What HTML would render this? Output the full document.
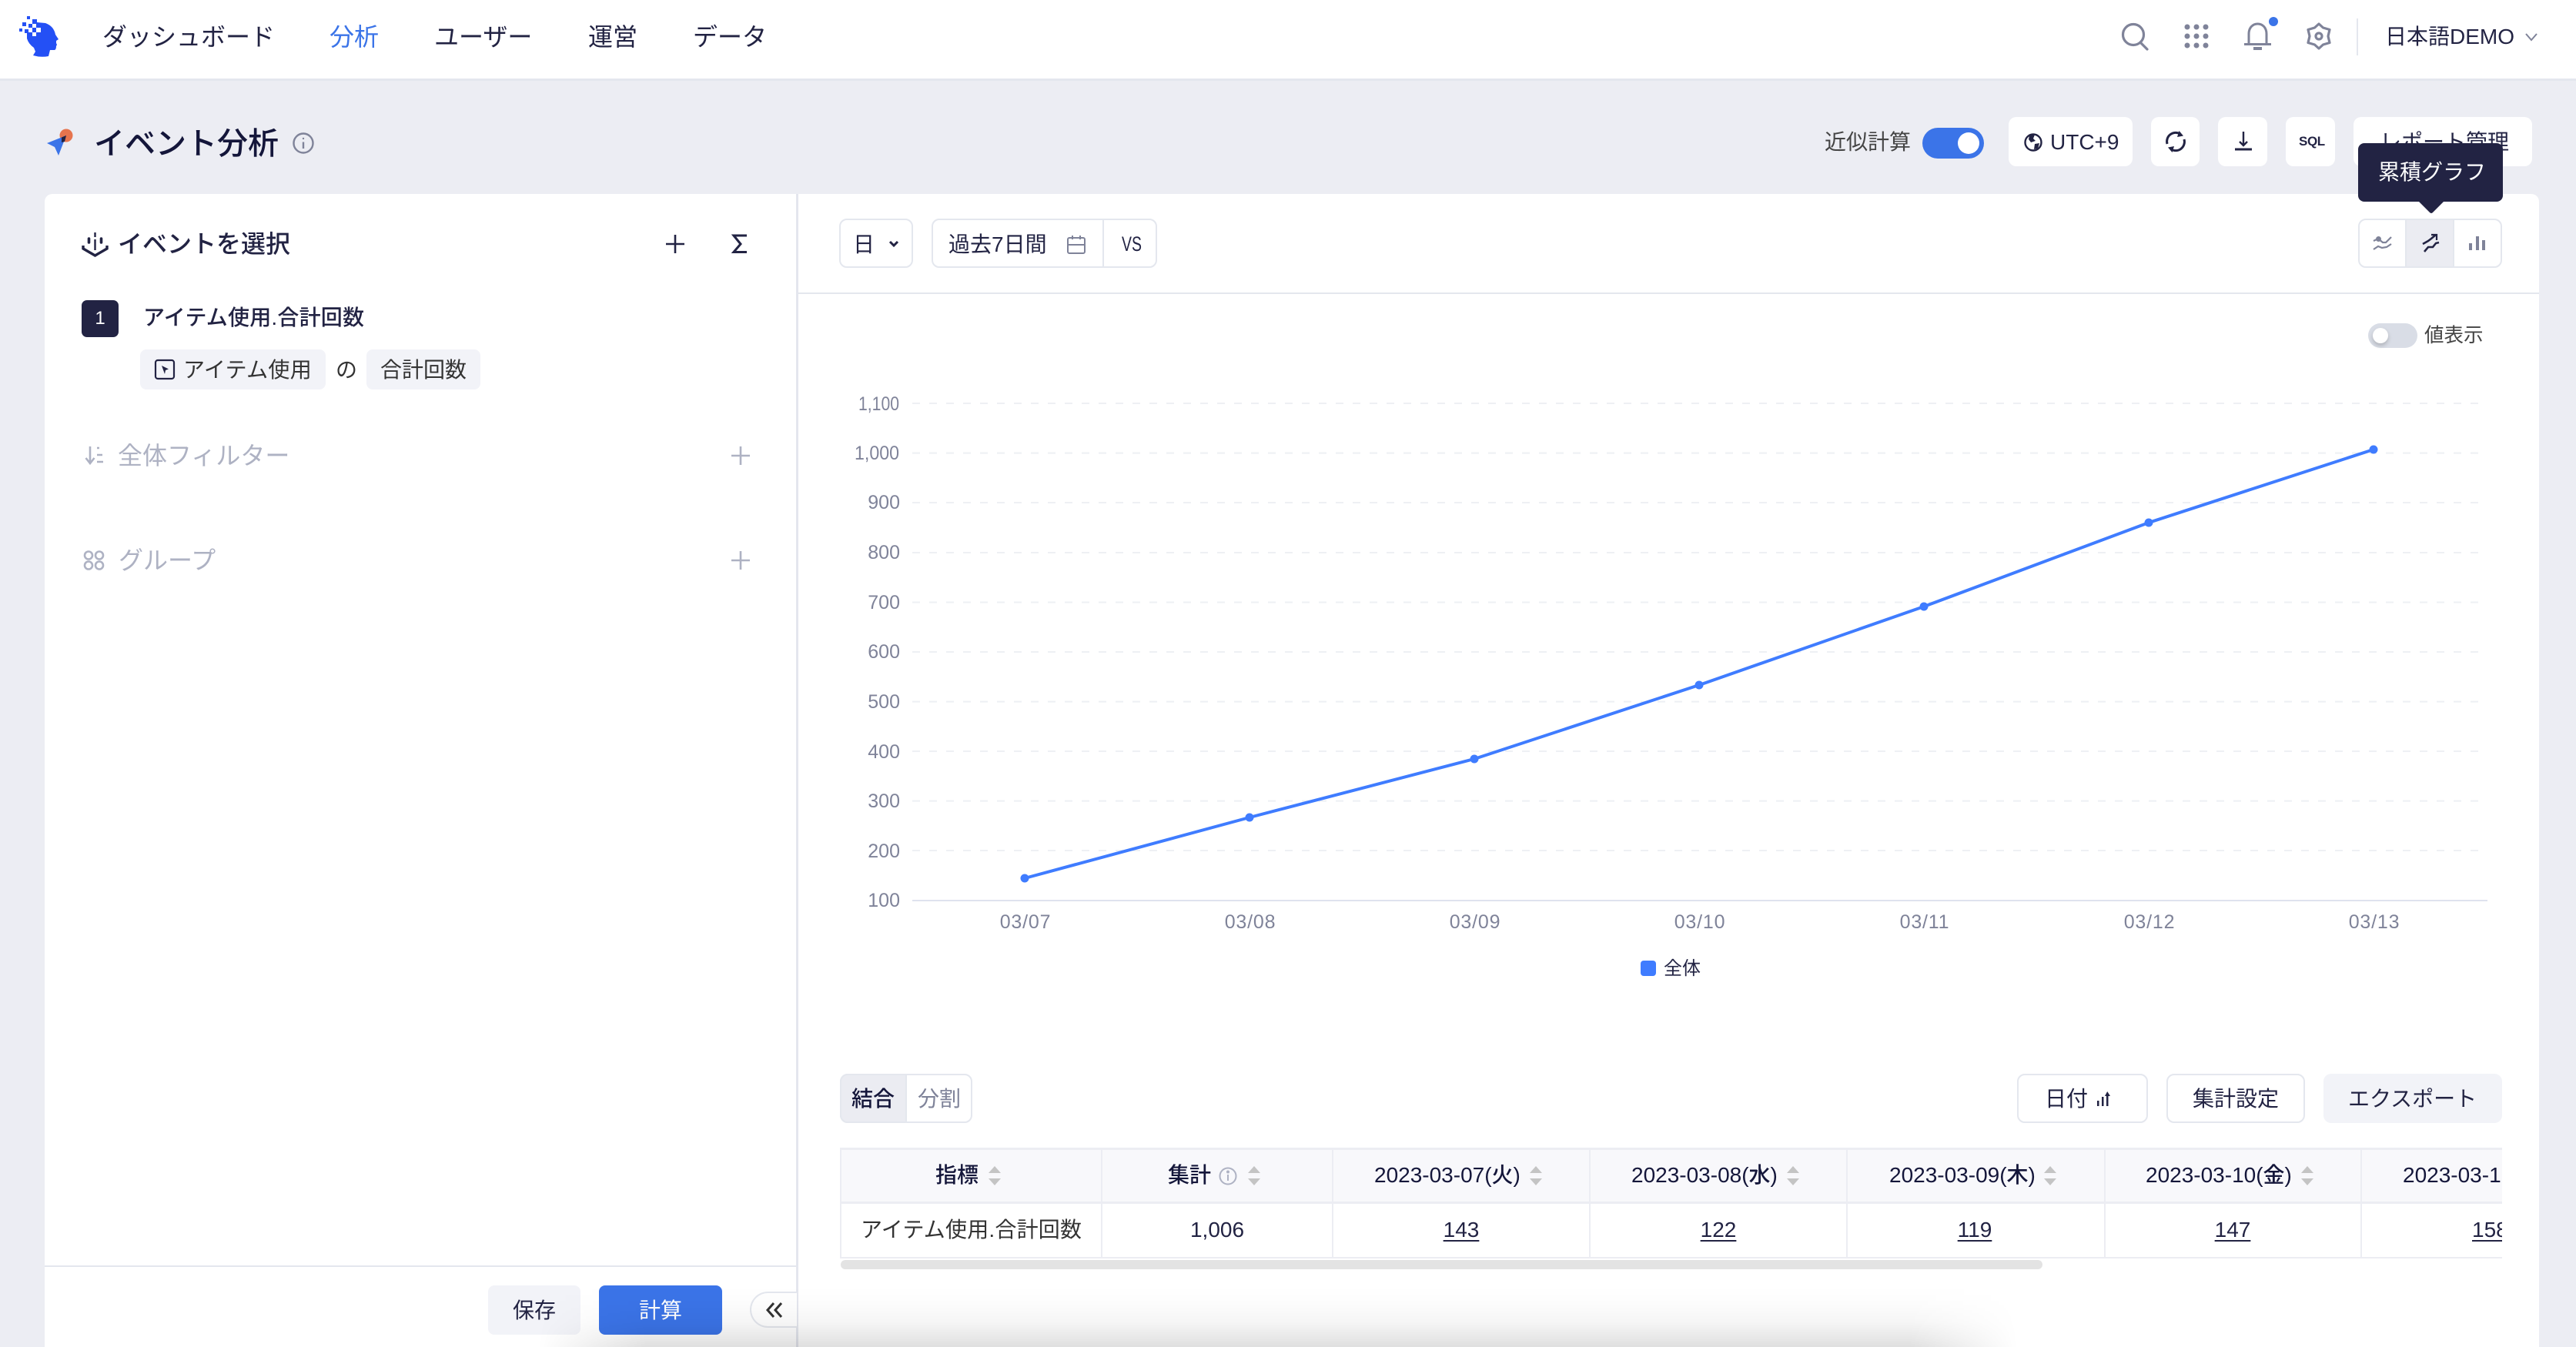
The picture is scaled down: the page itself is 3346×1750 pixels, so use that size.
<!DOCTYPE html>
<html lang="ja">
<head>
<meta charset="utf-8">
<title>イベント分析</title>
<style>
html,body{margin:0;padding:0;background:#ecedf3;width:3346px;height:1750px;overflow:hidden}
#root{position:relative;width:3346px;height:1750px;overflow:hidden;font-family:"Liberation Sans","Noto Sans CJK JP",sans-serif;color:#222343;background:#ecedf3}
.a{position:absolute;box-sizing:border-box}
.t{position:absolute;white-space:nowrap;line-height:40px;height:40px;font-size:28px}
.m{font-weight:500}
.c{transform:translateX(-50%)}
.btn{position:absolute;box-sizing:border-box;background:#fff;border-radius:10px}
.ob{position:absolute;box-sizing:border-box;border:2px solid #e4e7ee;border-radius:10px;background:#fff}
svg{position:absolute;overflow:visible}
.nav{font-size:32px}
.u{text-decoration:underline;text-decoration-thickness:2px;text-underline-offset:4px}
.th{font-weight:500;color:#14163a}
</style>
</head>
<body>
<div id="root">

<!-- header -->
<div class="a" style="left:0;top:0;width:3346px;height:102px;background:#fff"></div>
<div class="a" style="left:0;top:102px;width:3346px;height:3px;background:#e4e7ee"></div>

<svg style="left:0;top:0" width="120" height="100" viewBox="0 0 120 100">
  <path fill="#2450f5" d="M35 43V50Q37 57 44 62L46 67L43 72Q53 75 63 73L65 65H71Q73 64 73 60L74 58L73 56V53L76 51L72 45Q70 34 59 30L48 29H42V38H36Z"/>
  <g fill="#2450f5">
    <rect x="35" y="21" width="4" height="4"/><rect x="42" y="25" width="6" height="6"/>
    <rect x="29" y="29" width="5" height="5"/><rect x="37" y="31" width="5" height="5"/>
    <rect x="25" y="37" width="4" height="4"/><rect x="32" y="38" width="5" height="5"/>
  </g>
  <g fill="#fff">
    <rect x="42" y="31" width="5" height="5"/><rect x="47" y="36" width="6" height="6"/>
    <rect x="37" y="36" width="5" height="6"/><rect x="42" y="42" width="5" height="5"/>
  </g>
  <rect x="42" y="36" width="5" height="6" fill="#2450f5"/>
</svg>

<div class="t nav" style="left:133px;top:28px">ダッシュボード</div>
<div class="t nav" style="left:428px;top:28px;color:#3b74e8">分析</div>
<div class="t nav" style="left:564px;top:28px">ユーザー</div>
<div class="t nav" style="left:764px;top:28px">運営</div>
<div class="t nav" style="left:900px;top:28px">データ</div>

<!-- header right icons -->
<svg style="left:0;top:0" width="3346" height="100" viewBox="0 0 3346 100" fill="none" stroke="#7f8399">
  <circle cx="2771" cy="45" r="13.5" stroke-width="3.2"/>
  <path d="M2781 56L2789 64" stroke-width="3.2" stroke-linecap="round"/>
  <g fill="#7f8399" stroke="none">
    <circle cx="2841" cy="35" r="3.5"/><circle cx="2853" cy="35" r="3.5"/><circle cx="2865" cy="35" r="3.5"/>
    <circle cx="2841" cy="47" r="3.5"/><circle cx="2853" cy="47" r="3.5"/><circle cx="2865" cy="47" r="3.5"/>
    <circle cx="2841" cy="59" r="3.5"/><circle cx="2853" cy="59" r="3.5"/><circle cx="2865" cy="59" r="3.5"/>
    <rect x="2927" y="61" width="11" height="4"/>
  </g>
  <path d="M2921 57V44C2921 36 2926 31 2932.5 31C2939 31 2944 36 2944 44V57M2915 57.5H2950" stroke-width="3"/>
  <g transform="translate(2995 31)" stroke-width="3.2" stroke-linejoin="round">
    <polygon points="17,0 22.500,5 31,7.500 29,16 31,24.500 22.500,27 17,32 11.500,27 3,24.500 5,16 3,7.500 11.500,5"/>
    <circle cx="17" cy="16" r="4"/>
  </g>
  <circle cx="2953" cy="28" r="6" fill="#3b74e8" stroke="none"/>
  <path d="M3281 44L3288 52L3295 44" stroke-width="2"/>
</svg>
<div class="a" style="left:3061px;top:24px;width:2px;height:48px;background:#e4e7ee"></div>
<div class="t" style="left:3098px;top:28px">日本語DEMO</div>

<!-- title row -->
<svg style="left:0;top:150px" width="110" height="60" viewBox="0 150 110 60">
  <circle cx="86" cy="176" r="8.5" fill="#e6744e"/>
  <polygon points="61,186 86,176 76,202 71,191" fill="#3b74e8"/>
  <polygon points="80,178.500 86,176 84,184 80,185" fill="#222343"/>
</svg>
<div class="t m" style="left:122px;top:167px;font-size:40px;color:#14163a">イベント分析</div>
<svg style="left:380px;top:172px" width="28" height="28" viewBox="0 0 28 28" fill="none" stroke="#7f8399" stroke-width="2.4">
  <circle cx="14" cy="14" r="12.5"/><path d="M14 12.5V21"/><circle cx="14" cy="8" r="1.2" fill="#7f8399" stroke="none"/>
</svg>

<div class="t" style="left:2370px;top:165px;color:#444">近似計算</div>
<div class="a" style="left:2497px;top:166px;width:80px;height:40px;border-radius:20px;background:#3b74e8"></div>
<div class="a" style="left:2543px;top:172px;width:28px;height:28px;border-radius:50%;background:#fff"></div>

<div class="btn" style="left:2609px;top:152px;width:161px;height:64px"></div>
<svg style="left:2629px;top:173px" width="24" height="24" viewBox="0 0 24 24">
  <circle cx="12" cy="12" r="10.5" fill="none" stroke="#222343" stroke-width="2.4"/>
  <path d="M7 3L14 2L12 7L15 10L9 12L6 8ZM14 14L20 13L18 20L13 21Z" fill="#222343"/>
</svg>
<div class="t" style="left:2663px;top:165px">UTC+9</div>

<div class="btn" style="left:2794px;top:152px;width:63px;height:64px"></div>
<svg style="left:2810px;top:168px" width="32" height="32" viewBox="0 0 32 32" fill="none" stroke="#222343" stroke-width="3">
  <path d="M5 19A11.5 11.5 0 0 1 22 6"/><path d="M27 13A11.5 11.5 0 0 1 10 26"/>
  <path d="M20.5 2L26 8.5L18 10Z M11.5 30L6 23.5L14 22Z" fill="#222343" stroke="none"/>
</svg>

<div class="btn" style="left:2881px;top:152px;width:64px;height:64px"></div>
<svg style="left:2900px;top:168px" width="28" height="30" viewBox="0 0 28 30" fill="none" stroke="#222343" stroke-width="2.4">
  <path d="M14 3V20M9 16L14 21L19 16"/><path d="M3 26H25" stroke-width="3"/>
</svg>

<div class="btn" style="left:2969px;top:152px;width:64px;height:64px"></div>
<div class="t" style="left:2986px;top:164px;font-size:17px;font-weight:700;letter-spacing:-.4px">SQL</div>

<div class="btn" style="left:3057px;top:152px;width:232px;height:64px"></div>
<div class="t" style="left:3091px;top:165px">レポート管理</div>

<!-- main panels -->
<div class="a" style="left:58px;top:252px;width:3240px;height:1498px;background:#fff;border-radius:10px 10px 0 0"></div>
<div class="a" style="left:1034px;top:252px;width:3px;height:1498px;background:#e4e6ee"></div>

<!-- left panel -->
<svg style="left:105px;top:300px" width="38" height="36" viewBox="0 0 38 36" fill="none" stroke="#222343" stroke-width="3.4">
  <path d="M3 19V23L18.500 32L34 23V19"/>
  <path d="M18.500 2V8M18.500 11V25" stroke-width="2.4"/>
  <path d="M10.500 10V15M26.500 10V15" stroke-width="3.6" stroke-linecap="round"/>
</svg>
<div class="t m" style="left:153px;top:297px;font-size:32px">イベントを選択</div>
<svg style="left:860px;top:300px" width="120" height="34" viewBox="0 0 120 34" fill="none" stroke="#222343" stroke-width="2.6">
  <path d="M17 5V29M5 17H29"/>
  <path d="M110 6H93L102 17L93 27.500H110" stroke-width="3"/>
</svg>

<div class="a" style="left:106px;top:390px;width:48px;height:48px;border-radius:7px;background:#222343"></div>
<div class="t c" style="left:130px;top:394px;color:#fff;font-size:24px">1</div>
<div class="t m" style="left:186px;top:393px;letter-spacing:.2px">アイテム使用.合計回数</div>

<div class="a" style="left:182px;top:454px;width:241px;height:52px;border-radius:8px;background:#f2f3f8"></div>
<svg style="left:200px;top:466px" width="28" height="28" viewBox="0 0 28 28">
  <rect x="2" y="2" width="24" height="24" rx="3" fill="none" stroke="#222343" stroke-width="2.2"/>
  <polygon points="10,9 19,13.500 15,15 14,20" fill="#222343"/>
</svg>
<div class="t" style="left:238px;top:461px;color:#333;letter-spacing:.3px">アイテム使用</div>
<div class="t" style="left:436px;top:461px;color:#333">の</div>
<div class="a" style="left:476px;top:454px;width:148px;height:52px;border-radius:8px;background:#f2f3f8"></div>
<div class="t" style="left:494px;top:461px;color:#333">合計回数</div>

<svg style="left:107px;top:578px" width="32" height="28" viewBox="0 0 32 28" fill="none" stroke="#aeb2c3" stroke-width="2.6">
  <path d="M10 2V24M4.500 17L10 24L15.500 17"/><path d="M19 4H22M19 13H26M19 22H27"/>
</svg>
<div class="t" style="left:153px;top:572px;font-size:32px;color:#aeb2c3">全体フィルター</div>
<svg style="left:948px;top:578px" width="28" height="28" viewBox="0 0 28 28" stroke="#aeb2c3" stroke-width="2.6"><path d="M14 2V26M2 14H26"/></svg>

<svg style="left:107px;top:714px" width="30" height="28" viewBox="0 0 30 28" fill="none" stroke="#aeb2c3" stroke-width="2.6">
  <circle cx="8" cy="7.500" r="5"/><circle cx="22" cy="7.500" r="5"/><circle cx="8" cy="20.500" r="5"/><circle cx="22" cy="20.500" r="5"/>
</svg>
<div class="t" style="left:154px;top:708px;font-size:32px;color:#aeb2c3">グループ</div>
<svg style="left:948px;top:714px" width="28" height="28" viewBox="0 0 28 28" stroke="#aeb2c3" stroke-width="2.6"><path d="M14 2V26M2 14H26"/></svg>

<!-- left bottom -->
<div class="a" style="left:58px;top:1644px;width:976px;height:2px;background:#e4e7ee"></div>
<div class="a" style="left:634px;top:1670px;width:120px;height:64px;border-radius:8px;background:#f2f3f8"></div>
<div class="t c" style="left:694px;top:1683px">保存</div>
<div class="a" style="left:778px;top:1670px;width:160px;height:64px;border-radius:8px;background:#3b74e8"></div>
<div class="t c" style="left:858px;top:1683px;color:#fff">計算</div>
<div class="a" style="left:974px;top:1678px;width:61px;height:47px;border:2px solid #e4e7ee;border-right:0;border-radius:24px 0 0 24px;background:#fff"></div>
<svg style="left:994px;top:1691px" width="24" height="22" viewBox="0 0 24 22" fill="none" stroke="#333" stroke-width="3">
  <path d="M11 2L3 11L11 20M21 2L13 11L21 20"/>
</svg>

<!-- right top bar -->
<div class="ob" style="left:1090px;top:284px;width:96px;height:64px"></div>
<div class="t" style="left:1108px;top:298px">日</div>
<svg style="left:1154px;top:312px" width="14" height="10" viewBox="0 0 14 10" fill="none" stroke="#222343" stroke-width="3"><path d="M2 2L7 7L12 2"/></svg>

<div class="ob" style="left:1210px;top:284px;width:293px;height:64px"></div>
<div class="a" style="left:1432px;top:284px;width:2px;height:64px;background:#e4e7ee"></div>
<div class="t" style="left:1232px;top:298px">過去7日間</div>
<svg style="left:1385px;top:305px" width="26" height="26" viewBox="0 0 26 26" fill="none" stroke="#7f8399" stroke-width="2">
  <rect x="2" y="4" width="22" height="20" rx="2"/><path d="M2 13H24M8 1V6M18 1V6"/>
</svg>
<div class="t" style="left:1457px;top:297px;font-size:27px;transform-origin:left center;transform:scaleX(.72)">VS</div>

<!-- chart type group -->
<div class="ob" style="left:3063px;top:284px;width:187px;height:64px"></div>
<div class="a" style="left:3124px;top:286px;width:64px;height:60px;background:#ebecf2;border-left:2px solid #e4e7ee;border-right:2px solid #e4e7ee"></div>
<svg style="left:3080px;top:300px" width="30" height="30" viewBox="0 0 30 30" fill="none" stroke="#7f8399" stroke-width="2.2">
  <circle cx="9.500" cy="10.500" r="3.500" fill="#7f8399" stroke="none"/>
  <path d="M3 13L9 10L15 15L19 15L26 8"/><path d="M3 24L9 20L14 22L20 21L26 17"/>
</svg>
<svg style="left:3142px;top:300px" width="30" height="30" viewBox="0 0 30 30" fill="none" stroke="#222343" stroke-width="2.6">
  <path d="M5 17L12 13L16 10L22 5"/><path d="M16 5H23V12" stroke-width="2.2"/>
  <path d="M7 27L12 21H18L22 16L26 15"/>
</svg>
<svg style="left:3204px;top:304px" width="28" height="24" viewBox="0 0 28 24" fill="#7f8399">
  <rect x="3" y="12" width="4" height="9"/><rect x="12" y="3" width="4" height="18"/><rect x="20" y="8" width="4" height="13"/>
</svg>
<div class="a" style="left:1037px;top:380px;width:2261px;height:2px;background:#e4e7ee"></div>

<div class="a" style="left:3076px;top:420px;width:64px;height:32px;border-radius:16px;background:#d9dde6"></div>
<div class="a" style="left:3082px;top:426px;width:20px;height:20px;border-radius:50%;background:#fff;box-shadow:0 3px 6px rgba(0,0,0,.2)"></div>
<div class="t" style="left:3149px;top:416px;font-size:25.500px;color:#444">値表示</div>

<!-- chart -->
<svg style="left:0;top:0" width="3346" height="1750" viewBox="0 0 3346 1750" font-size="25" fill="#7f8399" font-family="Liberation Sans, sans-serif">
  <g stroke="#eef0f4" stroke-width="2" stroke-dasharray="10 12" fill="none">
    <path d="M1185 524H3231M1185 588.600H3231M1185 653H3231M1185 718H3231M1185 782.500H3231M1185 847H3231M1185 911.600H3231M1185 976H3231M1185 1040.600H3231M1185 1105H3231"/>
  </g>
  <path d="M1185 1170H3231" stroke="#dfe2ee" stroke-width="2"/>
  <text x="1115" y="533" textLength="53" lengthAdjust="spacingAndGlyphs">1,100</text>
  <text x="1110" y="597" textLength="58" lengthAdjust="spacingAndGlyphs">1,000</text>
  <g text-anchor="end">
    <text x="1169" y="661">900</text><text x="1169" y="726">800</text><text x="1169" y="791">700</text><text x="1169" y="855">600</text>
    <text x="1169" y="920">500</text><text x="1169" y="985">400</text><text x="1169" y="1049">300</text>
    <text x="1169" y="1114">200</text><text x="1169" y="1178">100</text>
  </g>
  <g text-anchor="middle" letter-spacing=".8">
    <text x="1332" y="1206">03/07</text><text x="1624" y="1206">03/08</text><text x="1916" y="1206">03/09</text>
    <text x="2208" y="1206">03/10</text><text x="2500" y="1206">03/11</text><text x="2792" y="1206">03/12</text><text x="3084" y="1206">03/13</text>
  </g>
  <polyline points="1331,1141 1623,1062 1915,986 2207,890 2499,788 2791,679 3083,584" fill="none" stroke="#3f7cff" stroke-width="4"/>
  <g fill="#3f7cff">
    <circle cx="1331" cy="1141" r="5.500"/><circle cx="1623" cy="1062" r="5.500"/><circle cx="1915" cy="986" r="5.500"/>
    <circle cx="2207" cy="890" r="5.500"/><circle cx="2499" cy="788" r="5.500"/><circle cx="2791" cy="679" r="5.500"/><circle cx="3083" cy="584" r="5.500"/>
  </g>
  <rect x="2131" y="1248" width="20" height="20" rx="4" fill="#3f7cff"/>
</svg>
<div class="t" style="left:2161px;top:1239px;font-size:24px">全体</div>

<!-- table toolbar -->
<div class="ob" style="left:1091px;top:1395px;width:172px;height:64px"></div>
<div class="a" style="left:1091px;top:1395px;width:87px;height:64px;background:#ebecf2;border-radius:10px 0 0 10px;border:2px solid #e4e7ee"></div>
<div class="t m" style="left:1106px;top:1408px;color:#14163a">結合</div>
<div class="t" style="left:1192px;top:1408px;color:#7f8399">分割</div>

<div class="ob" style="left:2620px;top:1395px;width:170px;height:64px"></div>
<div class="t" style="left:2656px;top:1408px">日付</div>
<svg style="left:2721px;top:1416px" width="24" height="24" viewBox="0 0 24 24" fill="#222343">
  <rect x="3" y="14" width="2.500" height="7"/><rect x="9" y="9" width="2.500" height="12"/><rect x="15" y="7" width="2.500" height="14"/><polygon points="16.200,2 20,8 13,8"/>
</svg>
<div class="ob" style="left:2814px;top:1395px;width:180px;height:64px"></div>
<div class="t" style="left:2848px;top:1408px">集計設定</div>
<div class="a" style="left:3018px;top:1395px;width:232px;height:64px;border-radius:10px;background:#f2f3f8"></div>
<div class="t" style="left:3050px;top:1408px">エクスポート</div>

<!-- table -->
<div class="a" style="left:1091px;top:1491px;width:2159px;height:144px;overflow:hidden">
  <div class="a" style="left:0;top:0;width:2159px;height:70px;background:#f8f8fb"></div>
  <div class="a" style="left:0;top:0;width:2159px;height:3px;background:#ecedf3"></div>
  <div class="a" style="left:0;top:70px;width:2159px;height:3px;background:#ecedf3"></div>
  <div class="a" style="left:0;top:142px;width:2159px;height:2px;background:#ecedf3"></div>
  <div class="a" style="left:0;top:0;width:2px;height:144px;background:#ecedf3"></div>
  <div class="a" style="left:339px;top:0;width:2px;height:144px;background:#ecedf3"></div>
  <div class="a" style="left:639px;top:0;width:2px;height:144px;background:#ecedf3"></div>
  <div class="a" style="left:973px;top:0;width:2px;height:144px;background:#ecedf3"></div>
  <div class="a" style="left:1307px;top:0;width:2px;height:144px;background:#ecedf3"></div>
  <div class="a" style="left:1642px;top:0;width:2px;height:144px;background:#ecedf3"></div>
  <div class="a" style="left:1975px;top:0;width:2px;height:144px;background:#ecedf3"></div>

  <div class="t th" style="left:124px;top:16px">指標</div>
  <div class="t th" style="left:426px;top:16px">集計</div>
  <svg style="left:490px;top:24px" width="28" height="26" viewBox="0 0 28 26" fill="none" stroke="#aeb2c3" stroke-width="2">
    <circle cx="14" cy="13" r="10.500"/><path d="M14 11V19"/><circle cx="14" cy="7.500" r="1" fill="#aeb2c3"/>
  </svg>
  <div class="t th" style="left:694px;top:16px">2023-03-07(火)</div>
  <div class="t th" style="left:1028px;top:16px">2023-03-08(水)</div>
  <div class="t th" style="left:1363px;top:16px">2023-03-09(木)</div>
  <div class="t th" style="left:1696px;top:16px">2023-03-10(金)</div>
  <div class="a" style="left:2030px;top:16px;width:127px;height:40px;overflow:hidden"><div class="t th" style="left:0;top:0">2023-03-11(土)</div></div>

  <svg style="left:0;top:0" width="2159" height="70" viewBox="0 0 2159 70" fill="#c4c4c4">
    <g transform="translate(193 24)"><polygon points="8,0 16,9 0,9"/><polygon points="0,16 16,16 8,25"/></g>
    <g transform="translate(530 24)"><polygon points="8,0 16,9 0,9"/><polygon points="0,16 16,16 8,25"/></g>
    <g transform="translate(896 24)"><polygon points="8,0 16,9 0,9"/><polygon points="0,16 16,16 8,25"/></g>
    <g transform="translate(1230 24)"><polygon points="8,0 16,9 0,9"/><polygon points="0,16 16,16 8,25"/></g>
    <g transform="translate(1564 24)"><polygon points="8,0 16,9 0,9"/><polygon points="0,16 16,16 8,25"/></g>
    <g transform="translate(1898 24)"><polygon points="8,0 16,9 0,9"/><polygon points="0,16 16,16 8,25"/></g>
  </svg>

  <div class="t" style="left:27px;top:87px;color:#333;letter-spacing:.2px">アイテム使用.合計回数</div>
  <div class="t c" style="left:490px;top:87px;color:#222343">1,006</div>
  <div class="t c u" style="left:807px;top:87px">143</div>
  <div class="t c u" style="left:1141px;top:87px">122</div>
  <div class="t c u" style="left:1474px;top:87px">119</div>
  <div class="t c u" style="left:1809px;top:87px">147</div>
  <div class="t u" style="left:2120px;top:87px">158</div>
</div>
<div class="a" style="left:1092px;top:1637px;width:1561px;height:12px;border-radius:6px;background:#e3e3e3"></div>

<!-- bottom shadow, kept inside the frame -->
<div class="a" style="left:700px;top:1670px;width:1920px;height:80px;background:linear-gradient(to bottom,rgba(0,0,0,0) 0%,rgba(0,0,0,.012) 30%,rgba(0,0,0,.04) 60%,rgba(0,0,0,.09) 85%,rgba(0,0,0,.125) 100%);-webkit-mask-image:linear-gradient(to right,transparent 0,rgba(0,0,0,.5) 70px,#000 140px,#000 1780px,rgba(0,0,0,.5) 1850px,transparent 100%);mask-image:linear-gradient(to right,transparent 0,rgba(0,0,0,.5) 70px,#000 140px,#000 1780px,rgba(0,0,0,.5) 1850px,transparent 100%)"></div>

<!-- tooltip -->
<div class="a" style="left:3063px;top:186px;width:188px;height:76px;border-radius:8px;background:#222343"></div>
<svg style="left:3138px;top:260px" width="40" height="20" viewBox="0 0 40 20"><path d="M2 0H38L22 16Q20 18 18 16Z" fill="#222343"/></svg>
<div class="t" style="left:3089px;top:204px;color:#fff">累積グラフ</div>

</div>
</body>
</html>
